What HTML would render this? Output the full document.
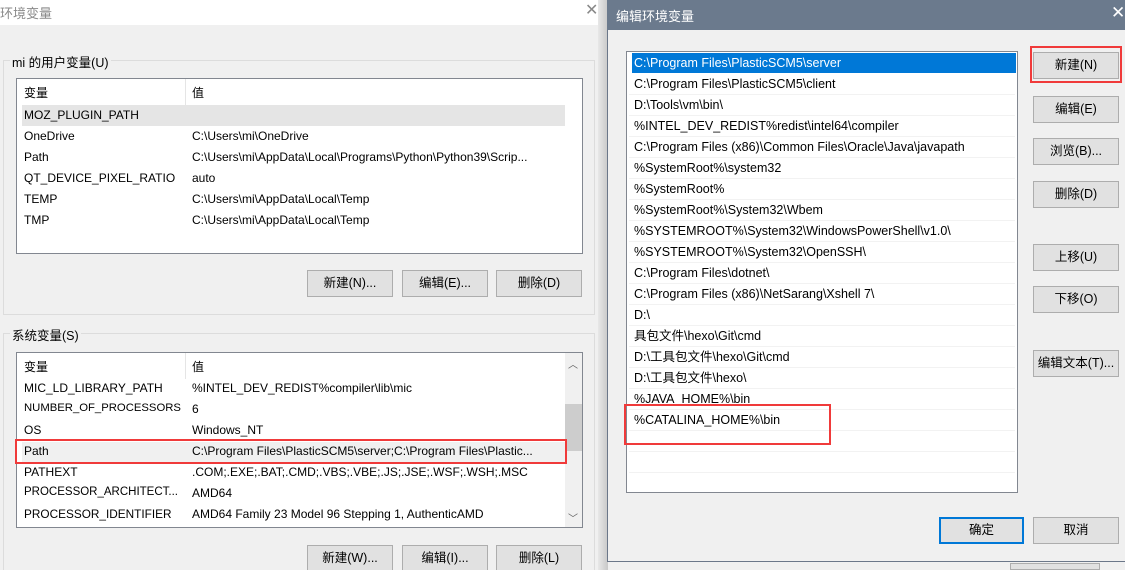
<!DOCTYPE html>
<html><head><meta charset="utf-8"><style>
*{margin:0;padding:0;box-sizing:border-box}
html,body{width:1125px;height:570px;overflow:hidden}
body{background:#f0f0f0;position:relative;font-family:"Liberation Sans","Noto Sans CJK SC",sans-serif;font-size:12.5px;color:#000}
.a{position:absolute;white-space:nowrap}
.L{font-size:12px}
.btn{position:absolute;background:#e1e1e1;border:1px solid #adadad;text-align:center;line-height:25px;height:27px;white-space:nowrap}
.lb{position:absolute;background:#fff;border:1px solid #828790}
.grp{position:absolute;border:1px solid #dcdcdc}
.row{position:absolute;left:0;height:21px;line-height:21px;white-space:nowrap}
</style></head><body>
<!-- left dialog -->
<div class="a" style="left:0;top:0;width:600px;height:25px;background:#fff"></div>
<div class="a" style="left:0;top:3px;color:#8a8a8a;font-size:13px">环境变量</div>
<div class="a" style="left:585px;top:0;color:#888;font-size:16px">✕</div>
<div class="grp" style="left:3px;top:60px;width:592px;height:255px"></div>
<div class="a" style="left:10px;top:52px;background:#f0f0f0;padding:0 2px">mi 的用户变量(U)</div>
<div class="lb L" style="left:16px;top:78px;width:567px;height:176px">
 <div class="a" style="left:168px;top:0;width:1px;height:26px;background:#e5e5e5"></div>
 <div class="a" style="left:7px;top:5px">变量</div><div class="a" style="left:175px;top:5px">值</div>
 <div class="a" style="left:5px;top:26px;width:543px;height:21px;background:#e5e5e5"></div>
 <div class="a" style="left:7px;top:29px">MOZ_PLUGIN_PATH</div>
 <div class="a" style="left:7px;top:50px">OneDrive</div><div class="a" style="left:175px;top:50px">C:\Users\mi\OneDrive</div>
 <div class="a" style="left:7px;top:71px">Path</div><div class="a" style="left:175px;top:71px">C:\Users\mi\AppData\Local\Programs\Python\Python39\Scrip...</div>
 <div class="a" style="left:7px;top:92px">QT_DEVICE_PIXEL_RATIO</div><div class="a" style="left:175px;top:92px">auto</div>
 <div class="a" style="left:7px;top:113px">TEMP</div><div class="a" style="left:175px;top:113px">C:\Users\mi\AppData\Local\Temp</div>
 <div class="a" style="left:7px;top:134px">TMP</div><div class="a" style="left:175px;top:134px">C:\Users\mi\AppData\Local\Temp</div>
</div>
<div class="btn" style="left:307px;top:270px;width:86px">新建(N)...</div>
<div class="btn" style="left:402px;top:270px;width:86px">编辑(E)...</div>
<div class="btn" style="left:496px;top:270px;width:86px">删除(D)</div>

<div class="grp" style="left:3px;top:333px;width:592px;height:240px"></div>
<div class="a" style="left:10px;top:325px;background:#f0f0f0;padding:0 2px">系统变量(S)</div>
<div class="lb L" style="left:16px;top:352px;width:567px;height:176px">
 <div class="a" style="left:168px;top:0;width:1px;height:26px;background:#e5e5e5"></div>
 <div class="a" style="left:7px;top:5px">变量</div><div class="a" style="left:175px;top:5px">值</div>
 <div class="a" style="left:7px;top:28px">MIC_LD_LIBRARY_PATH</div><div class="a" style="left:175px;top:28px">%INTEL_DEV_REDIST%compiler\lib\mic</div>
 <div class="a" style="left:7px;top:49px;font-size:11.3px">NUMBER_OF_PROCESSORS</div><div class="a" style="left:175px;top:49px">6</div>
 <div class="a" style="left:7px;top:70px">OS</div><div class="a" style="left:175px;top:70px">Windows_NT</div>
 <div class="a" style="left:5px;top:89px;width:543px;height:21px;background:#f0f0f0"></div>
 <div class="a" style="left:7px;top:91px">Path</div><div class="a" style="left:175px;top:91px">C:\Program Files\PlasticSCM5\server;C:\Program Files\Plastic...</div>
 <div class="a" style="left:7px;top:112px">PATHEXT</div><div class="a" style="left:175px;top:112px">.COM;.EXE;.BAT;.CMD;.VBS;.VBE;.JS;.JSE;.WSF;.WSH;.MSC</div>
 <div class="a" style="left:7px;top:133px;font-size:11.5px">PROCESSOR_ARCHITECT...</div><div class="a" style="left:175px;top:133px">AMD64</div>
 <div class="a" style="left:7px;top:154px;font-size:11.8px">PROCESSOR_IDENTIFIER</div><div class="a" style="left:175px;top:154px">AMD64 Family 23 Model 96 Stepping 1, AuthenticAMD</div>
 <div class="a" style="left:548px;top:0;width:17px;height:174px;background:#f0f0f0"></div>
 <div class="a" style="left:551px;top:3px;color:#606060;font-size:10px">︿</div>
 <div class="a" style="left:548px;top:51px;width:17px;height:47px;background:#cdcdcd"></div>
 <div class="a" style="left:551px;top:157px;color:#606060;font-size:10px">﹀</div>
</div>
<div class="a" style="left:15px;top:439px;width:552px;height:25px;border:2px solid #f03a3a"></div>
<div class="btn" style="left:307px;top:545px;width:86px">新建(W)...</div>
<div class="btn" style="left:402px;top:545px;width:86px">编辑(I)...</div>
<div class="btn" style="left:496px;top:545px;width:86px">删除(L)</div>
<div class="a" style="left:598px;top:0;width:10px;height:570px;background:linear-gradient(90deg,#e8e8e8,#c8c8c8)"></div>

<!-- right dialog -->
<div class="a" style="left:607px;top:0;width:518px;height:562px;background:#f0f0f0;border-left:1px solid #6b7789;border-bottom:1px solid #6b7789"></div>
<div class="a" style="left:607px;top:0;width:518px;height:30px;background:#6b7a8d"></div>
<div class="a" style="left:616px;top:6px;color:#fff;font-size:13px">编辑环境变量</div>
<div class="a" style="left:1111px;top:3px;color:#fff;font-size:17px">✕</div>
<div class="lb" style="left:626px;top:51px;width:392px;height:442px">
 <div class="a" style="left:5px;top:1px;width:384px;height:20px;background:#0078d7"></div>
 <div class="row" style="top:1px;color:#fff;left:7px;line-height:20px">C:\Program Files\PlasticSCM5\server</div>
 <div style="position:absolute;left:2px;top:0;width:386px">
  <div class="a" style="left:0;top:42px;width:386px;border-top:1px solid #f2f2f2"></div><div class="a" style="left:0;top:63px;width:386px;border-top:1px solid #f2f2f2"></div><div class="a" style="left:0;top:84px;width:386px;border-top:1px solid #f2f2f2"></div><div class="a" style="left:0;top:105px;width:386px;border-top:1px solid #f2f2f2"></div><div class="a" style="left:0;top:126px;width:386px;border-top:1px solid #f2f2f2"></div><div class="a" style="left:0;top:147px;width:386px;border-top:1px solid #f2f2f2"></div><div class="a" style="left:0;top:168px;width:386px;border-top:1px solid #f2f2f2"></div><div class="a" style="left:0;top:189px;width:386px;border-top:1px solid #f2f2f2"></div><div class="a" style="left:0;top:210px;width:386px;border-top:1px solid #f2f2f2"></div><div class="a" style="left:0;top:231px;width:386px;border-top:1px solid #f2f2f2"></div><div class="a" style="left:0;top:252px;width:386px;border-top:1px solid #f2f2f2"></div><div class="a" style="left:0;top:273px;width:386px;border-top:1px solid #f2f2f2"></div><div class="a" style="left:0;top:294px;width:386px;border-top:1px solid #f2f2f2"></div><div class="a" style="left:0;top:315px;width:386px;border-top:1px solid #f2f2f2"></div><div class="a" style="left:0;top:336px;width:386px;border-top:1px solid #f2f2f2"></div><div class="a" style="left:0;top:357px;width:386px;border-top:1px solid #f2f2f2"></div><div class="a" style="left:0;top:378px;width:386px;border-top:1px solid #f2f2f2"></div><div class="a" style="left:0;top:399px;width:386px;border-top:1px solid #f2f2f2"></div><div class="a" style="left:0;top:420px;width:386px;border-top:1px solid #f2f2f2"></div>
 </div>
 <div style="position:absolute;left:7px;top:22px">
  <div class="row" style="top:0">C:\Program Files\PlasticSCM5\client</div>
  <div class="row" style="top:21px">D:\Tools\vm\bin\</div>
  <div class="row" style="top:42px">%INTEL_DEV_REDIST%redist\intel64\compiler</div>
  <div class="row" style="top:63px">C:\Program Files (x86)\Common Files\Oracle\Java\javapath</div>
  <div class="row" style="top:84px">%SystemRoot%\system32</div>
  <div class="row" style="top:105px">%SystemRoot%</div>
  <div class="row" style="top:126px">%SystemRoot%\System32\Wbem</div>
  <div class="row" style="top:147px">%SYSTEMROOT%\System32\WindowsPowerShell\v1.0\</div>
  <div class="row" style="top:168px">%SYSTEMROOT%\System32\OpenSSH\</div>
  <div class="row" style="top:189px">C:\Program Files\dotnet\</div>
  <div class="row" style="top:210px">C:\Program Files (x86)\NetSarang\Xshell 7\</div>
  <div class="row" style="top:231px">D:\</div>
  <div class="row" style="top:252px">具包文件\hexo\Git\cmd</div>
  <div class="row" style="top:273px">D:\工具包文件\hexo\Git\cmd</div>
  <div class="row" style="top:294px">D:\工具包文件\hexo\</div>
  <div class="row" style="top:315px">%JAVA_HOME%\bin</div>
  <div class="row" style="top:336px">%CATALINA_HOME%\bin</div>
 </div>
</div>
<div class="a" style="left:624px;top:404px;width:207px;height:41px;border:2px solid #f03a3a"></div>
<div class="btn" style="left:1033px;top:52px;width:86px">新建(N)</div>
<div class="a" style="left:1030px;top:46px;width:92px;height:37px;border:2px solid #f03a3a"></div>
<div class="btn" style="left:1033px;top:96px;width:86px">编辑(E)</div>
<div class="btn" style="left:1033px;top:138px;width:86px">浏览(B)...</div>
<div class="btn" style="left:1033px;top:181px;width:86px">删除(D)</div>
<div class="btn" style="left:1033px;top:244px;width:86px">上移(U)</div>
<div class="btn" style="left:1033px;top:286px;width:86px">下移(O)</div>
<div class="btn" style="left:1033px;top:350px;width:86px">编辑文本(T)...</div>
<div class="btn" style="left:939px;top:517px;width:85px;border:2px solid #0078d7;line-height:23px">确定</div>
<div class="btn" style="left:1033px;top:517px;width:86px">取消</div>
<div class="a" style="left:1010px;top:563px;width:90px;height:7px;background:#e1e1e1;border:1px solid #adadad"></div>
</body></html>
